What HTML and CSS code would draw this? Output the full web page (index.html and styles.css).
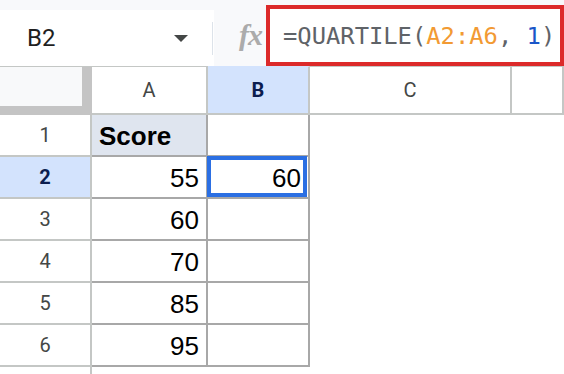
FILE: index.html
```html
<!DOCTYPE html>
<html lang="en">
<head>
    <meta charset="UTF-8">
    <meta name="viewport" content="width=device-width, initial-scale=1.0">
    <title>QUARTILE</title>
    <link rel="stylesheet" href="styles.css">
</head>
<body>
    <!-- BARRA DE FORMULA -->
    <div class="toolbar">
        <div class="name-box">
            <span class="cell-ref">B2</span>
            <span class="dropdown"></span>
            <span class="divider"></span>
        </div>
        <div class="fx">fx</div>
        <div class="formula">=QUARTILE(<span class="ref">A2:A6</span>, <span class="num">1</span>)</div>
    </div>

    <!-- HOJA -->
    <div class="sheet">
        <div class="corner"><div class="corner-inner"></div></div>
        <div class="col-head">A</div>
        <div class="col-head active">B</div>
        <div class="col-head">C</div>
        <div class="col-head"></div>

        <div class="row-head">1</div>
        <div class="cell label">Score</div>
        <div class="cell"></div>
        <div></div><div></div>

        <div class="row-head active">2</div>
        <div class="cell">55</div>
        <div class="cell selected">60</div>
        <div></div><div></div>

        <div class="row-head">3</div>
        <div class="cell">60</div>
        <div class="cell"></div>
        <div></div><div></div>

        <div class="row-head">4</div>
        <div class="cell">70</div>
        <div class="cell"></div>
        <div></div><div></div>

        <div class="row-head">5</div>
        <div class="cell">85</div>
        <div class="cell"></div>
        <div></div><div></div>

        <div class="row-head">6</div>
        <div class="cell">95</div>
        <div class="cell"></div>
        <div></div><div></div>

        <div class="row-head filler"></div>
    </div>
</body>
</html>
```

FILE: styles.css
```css
/* GENERAL */
body {
    margin: 0;
    width: 564px;
    height: 374px;
    overflow: hidden;
    background-color: #fff;
    font-family: Roboto, "Liberation Sans", sans-serif;
}

/* BARRA DE FORMULA */
.toolbar {
    display: flex;
    height: 66px;
    background-color: #f8f9fb;
}

.name-box {
    width: 214px;
    margin-top: 10px;
    padding-left: 27px;
    box-sizing: border-box;
    background-color: #fff;
    display: flex;
    align-items: center;
}

.cell-ref {
    font-size: 24px;
    color: #1f1f1f;
}

.dropdown {
    margin-left: auto;
    margin-right: 24px;
    border-left: 7.5px solid transparent;
    border-right: 7.5px solid transparent;
    border-top: 7px solid #444746;
}

.divider {
    width: 1px;
    height: 33px;
    margin-right: 1px;
    background-color: #dde3ea;
}

.fx {
    width: 52px;
    padding-left: 25px;
    padding-top: 3px;
    box-sizing: border-box;
    display: flex;
    align-items: center;
    font-family: "Liberation Serif", serif;
    font-style: italic;
    font-weight: bold;
    font-size: 30px;
    letter-spacing: -1px;
    color: #ababab;
}

.formula {
    flex: 1;
    margin-top: 5px;
    height: 61px;
    box-sizing: border-box;
    border: 4px solid #dc2a2a;
    background-color: #fff;
    padding-left: 13px;
    display: flex;
    align-items: center;
    white-space: pre;
    overflow: hidden;
    font-family: "DejaVu Sans Mono", monospace;
    font-size: 23.8px;
    color: #5f6368;
}

.formula .ref {
    color: #f29a33;
}

.formula .num {
    color: #1a56c8;
}

/* HOJA */
.sheet {
    display: grid;
    grid-template-columns: 92px 116px 102px 202px 1fr;
    grid-template-rows: 49px repeat(6, 42px) 1fr;
    height: 308px;
}

.corner {
    border-top: 1px solid #c4c7c5;
    background-color: #c4c4c4;
    padding: 0 10px 9px 0;
}

.corner-inner {
    height: 100%;
    background-color: #f8f9fa;
}

.col-head {
    border-top: 1px solid #c4c7c5;
    border-right: 2px solid #c4c7c5;
    border-bottom: 2px solid #c4c7c5;
    display: flex;
    justify-content: center;
    align-items: center;
    font-size: 20px;
    color: #444746;
}

.row-head {
    border-right: 2px solid #c4c7c5;
    border-bottom: 2px solid #c4c7c5;
    display: flex;
    justify-content: center;
    align-items: center;
    font-size: 20px;
    color: #444746;
}

.row-head.filler {
    border-bottom: none;
}

.col-head.active,
.row-head.active {
    background-color: #d3e3fd;
    color: #0b1d4f;
    font-weight: bold;
}

.col-head.active {
    border-top-color: #d3e3fd;
}

/* CELDAS */
.cell {
    border-right: 2px solid #a8a8a8;
    border-bottom: 2px solid #a8a8a8;
    display: flex;
    justify-content: flex-end;
    align-items: flex-end;
    padding: 0 7px 3px;
    font-family: "Liberation Sans", Arial, sans-serif;
    font-size: 26px;
    color: #000;
}

.cell.label {
    justify-content: flex-start;
    font-weight: bold;
    background-color: #dfe5ef;
}

.cell.selected {
    position: relative;
}

.cell.selected::after {
    content: "";
    position: absolute;
    left: -1px;
    top: -1px;
    right: 1px;
    bottom: 0;
    border: 4px solid #2b6fe3;
}
```
